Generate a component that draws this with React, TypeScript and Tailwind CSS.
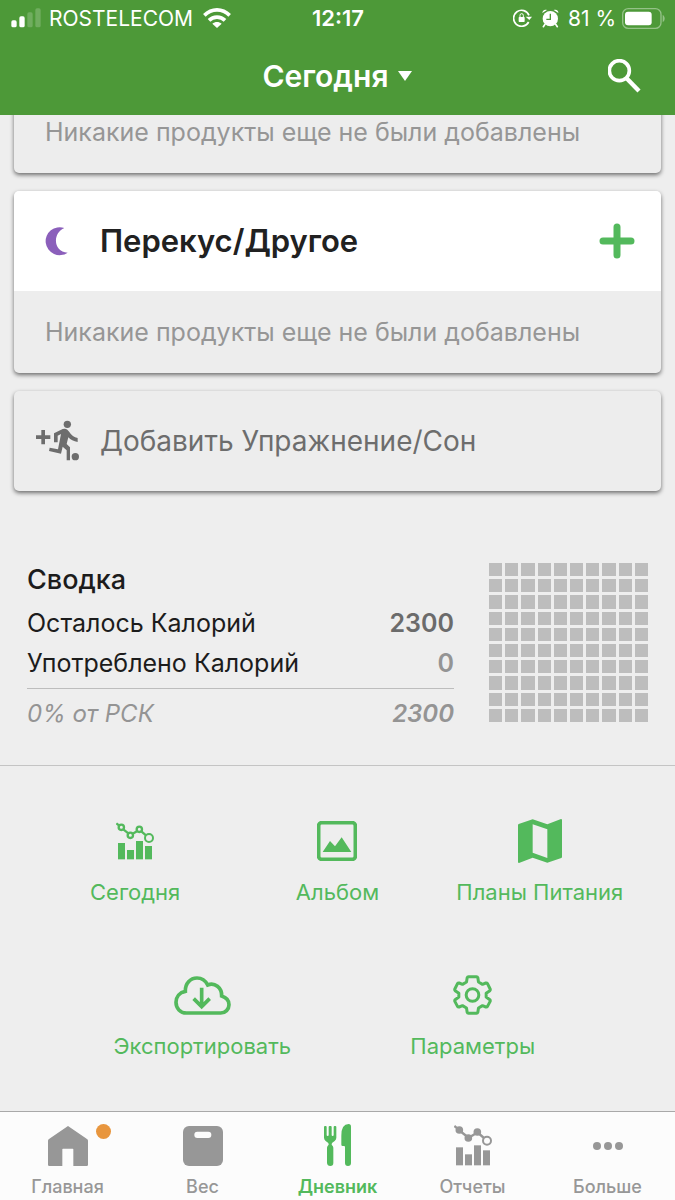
import type { ReactNode } from "react";

const EMPTY_MEAL = "Никакие продукты еще не были добавлены";

function StatusBar() {
  return (
    <div className="grid grid-cols-[1fr_auto_1fr] items-center h-9 pl-[11px] pr-[10px] text-[21px] leading-none">
      <div className="flex items-center">
        <svg className="w-[30px] h-5" viewBox="0 0 90 60" fill="currentColor">
          <rect x="1" y="37" width="16" height="21" rx="5" />
          <rect x="25" y="25" width="16" height="33" rx="5" />
          <rect x="49" y="13" width="16" height="45" rx="5" opacity=".2" />
          <rect x="73" y="1" width="16" height="57" rx="5" opacity=".2" />
        </svg>
        <span className="ml-2 mr-[10px]">ROSTELECOM</span>
        <svg className="w-7 h-5" viewBox="0 0 84 60" fill="none" stroke="currentColor" strokeWidth="11">
          <path d="M4 22 C26 0 58 0 80 22" />
          <path d="M18 37 C31 24 53 24 66 37" />
          <path d="M42 60 L28 47 C36 40 48 40 56 47 Z" fill="currentColor" stroke="none" />
        </svg>
      </div>
      <span className="text-[22px] font-semibold">12:17</span>
      <div className="flex items-center justify-end">
        <svg className="w-[19px] h-[18px] mr-[10px]" viewBox="0 0 57 54" fill="none" stroke="currentColor">
          <path d="M47 39 A24 24 0 1 1 48 19" strokeWidth="5" />
          <path d="M38 23 H57 L49 33 Z" fill="currentColor" stroke="none" />
          <rect x="17" y="24" width="18" height="15" rx="2" fill="currentColor" stroke="none" />
          <path d="M21 25 V19 a5 5 0 0 1 10 0 V25" strokeWidth="3" />
        </svg>
        <svg className="w-[17px] h-[19px] mr-[9px]" viewBox="0 0 51 57" fill="currentColor">
          <circle cx="25" cy="29" r="23" />
          <path d="M1 12 C1 4 8 0 15 3 Z M35 3 C43 0 50 4 49 12 Z" />
          <path d="M9 46 L4 53 M41 46 L46 53" stroke="currentColor" strokeWidth="5" strokeLinecap="round" />
          <path d="M25 14 V31 H13" fill="none" stroke="#4d9938" strokeWidth="4" />
        </svg>
        <span className="mr-[6px]">81 %</span>
        <svg className="w-[43px] h-[21px]" viewBox="0 0 129 63" fill="none">
          <rect x="2" y="2" width="115" height="59" rx="17" stroke="#fff" strokeOpacity=".4" strokeWidth="4" />
          <rect x="9" y="11" width="80" height="41" rx="9" fill="#fff" />
          <path d="M122 21 C130 24 130 39 122 42 Z" fill="#fff" fillOpacity=".4" />
        </svg>
      </div>
    </div>
  );
}

function Header() {
  return (
    <header className="relative z-10 h-[115px] shrink-0 bg-[#4d9938] text-white">
      <StatusBar />
      <div className="grid grid-cols-[1fr_auto_1fr] items-center h-20 px-8">
        <button className="col-start-2 flex items-center gap-[10px] text-[30px] font-semibold">
          Сегодня
          <svg className="w-[14px] h-[10px]" viewBox="0 0 14 10" fill="currentColor">
            <path d="M0 0 H14 L7 10 Z" />
          </svg>
        </button>
        <button className="justify-self-end" aria-label="Поиск">
          <svg className="w-[35px] h-[34px]" viewBox="0 0 105 102" fill="none" stroke="currentColor">
            <circle cx="34" cy="35" r="30" strokeWidth="11" />
            <path d="M55 57 L93 96" strokeWidth="13" />
          </svg>
        </button>
      </div>
    </header>
  );
}

function Card({ children }: { children: ReactNode }) {
  return (
    <section className="rounded-[5px] overflow-hidden bg-[#ededed] shadow-[0_2px_4px_rgba(0,0,0,0.55)]">
      {children}
    </section>
  );
}

function EmptyMeal() {
  return (
    <p className="flex items-center h-[82px] pt-[2px] pl-[31px] text-[25px] whitespace-nowrap text-[#969696]">
      {EMPTY_MEAL}
    </p>
  );
}

function Meals() {
  return (
    <div className="flex flex-col gap-[18px] mx-[14px] -mt-6">
      <Card>
        <EmptyMeal />
      </Card>
      <Card>
        <div className="flex items-center h-[100px] pl-[31px] pr-[26px] bg-white">
          <svg className="w-[23px] h-[29px]" viewBox="0 0 69 87" fill="#8b5fbb">
            <path d="M58 3 A42 42 0 1 0 68 77 C24 75 22 18 58 3 Z" />
          </svg>
          <h2 className="ml-8 text-[31px] font-semibold text-[#212121]">Перекус/Другое</h2>
          <button className="ml-auto text-[#53b95c]" aria-label="Добавить продукт">
            <svg className="w-9 h-9" viewBox="0 0 36 36" stroke="currentColor" strokeWidth="7" strokeLinecap="round">
              <path d="M18 4 V32 M4 18 H32" />
            </svg>
          </button>
        </div>
        <EmptyMeal />
      </Card>
      <Card>
        <button className="flex items-center w-full h-[100px] pl-[21px] text-[28px] text-[#6d6d6d]">
          <svg className="w-[46px] h-[42px] mr-[19px]" viewBox="0 0 138 126" fill="currentColor">
            <path d="M3 46 H19 V30 H30 V46 H46 V57 H30 V73 H19 V57 H3 Z" />
            <circle cx="97" cy="13" r="11" />
            <circle cx="121" cy="110" r="11" />
            <path d="M57 67 V40 L83 27 Q91 24 97 29 L103 36 Q112 51 128 54 V66 Q110 63 100 52 L95 72 L105 82 V121 H95 V91 L83 80 L78 101 L42 93 L44 83 L69 88 L78 42 L68 47 V67 Z" />
          </svg>
          Добавить Упражнение/Сон
        </button>
      </Card>
    </div>
  );
}

function Summary() {
  return (
    <section className="flex mt-[71px] px-[27px] pb-10 border-b border-[#c4c4c4] text-[25px]">
      <div className="flex-1 mr-[35px] text-[#1c1c1c]">
        <h2 className="h-[41px] leading-9 text-[27px] font-medium">Сводка</h2>
        <dl>
          <div className="flex justify-between h-10 leading-10">
            <dt>Осталось Калорий</dt>
            <dd className="font-semibold text-[#6b6b6b]">2300</dd>
          </div>
          <div className="flex justify-between h-10 leading-10">
            <dt>Употреблено Калорий</dt>
            <dd className="font-semibold text-[#949494]">0</dd>
          </div>
          <div className="flex justify-between mt-[5px] pt-[5px] h-[37px] leading-10 border-t border-[#bdbdbd] text-[24px] italic text-[#949494]">
            <dt>0% от РСК</dt>
            <dd className="font-semibold">2300</dd>
          </div>
        </dl>
      </div>
      <div className="grid grid-cols-10 gap-[3px] w-[159px] h-[159px] mt-px">
        {Array.from({ length: 100 }, (_, i) => (
          <span key={i} className="bg-[#bdbdbd]" />
        ))}
      </div>
    </section>
  );
}

function ChartIcon({ filled = false }: { filled?: boolean }) {
  const d = filled ? 5 : 0;
  const dot = filled ? "currentColor" : "none";
  return (
    <svg
      className={filled ? "w-[38px] h-[42px]" : "w-[39px] h-[38px]"}
      viewBox={filled ? "0 -2 114 126" : "0 0 117 114"}
      fill="none"
      stroke="currentColor"
      strokeWidth="7"
    >
      <path d="M1 4 L10 11 M22 22 L37 34 M49 36 L64 27 M76 28 L90 40" />
      <circle cx="16" cy="16" r="8" fill={dot} />
      <circle cx="43" cy="40" r="8" fill={dot} />
      <circle cx="70" cy="22" r="8" fill={dot} />
      <circle cx="99" cy="48" r="12" strokeWidth="6" />
      <g fill="currentColor" stroke="none">
        <rect x="6" y={63 + d} width="21" height={49 + d} />
        <rect x="33" y={84 + d} width="21" height={28 + d} />
        <rect x="60" y={57 + d} width="21" height={55 + d} />
        <rect x="87" y={72 + d} width="21" height={40 + d} />
      </g>
    </svg>
  );
}

function AlbumIcon() {
  return (
    <svg className="w-10 h-10" viewBox="0 0 120 120" fill="currentColor">
      <rect x="5" y="5" width="110" height="110" rx="9" fill="none" stroke="currentColor" strokeWidth="11" />
      <path d="M17 93 L39 60 L54 76 L74 49 L103 93 Z" />
    </svg>
  );
}

function MapIcon() {
  return (
    <svg className="w-11 h-11" viewBox="0 0 132 132" fill="currentColor" fillRule="evenodd">
      <path d="M2 15 L44 1 L88 16 L129 0 Q132 0 132 3 V114 Q132 116 130 117 L88 131 L44 116 L3 132 Q0 132 0 129 V18 Q0 16 2 15 Z M44 16 V101 L88 117 V31 Z" />
    </svg>
  );
}

function CloudIcon() {
  return (
    <svg className="w-[57px] h-[39px]" viewBox="0 0 171 117" fill="none" stroke="currentColor" strokeWidth="11">
      <path d="M37 111 C19 111 6 97 6 79 C6 62 17 49 34 46 C33 22 49 6 69 6 C84 6 94 13 101 27 C122 18 144 35 143 60 C156 64 165 73 165 86 C165 100 154 111 140 111 Z" />
      <path d="M83 35 V91 M59 68 L83 92 L107 68" />
    </svg>
  );
}

function GearIcon() {
  return (
    <svg className="w-[39px] h-10" viewBox="0 0 116 120" fill="none" stroke="currentColor" strokeWidth="9" strokeLinejoin="round">
      <path d="M46 5 H70 Q73 5 74 8 L76 21 L88 28 L98 24 Q101 23 103 26 L111 42 Q112 45 110 47 L99 55 V66 L110 74 Q112 76 111 79 L103 94 Q101 97 98 96 L88 92 L76 99 L74 112 Q73 115 70 115 H46 Q43 115 42 112 L40 99 L28 92 L18 96 Q15 97 13 94 L5 79 Q4 76 6 74 L17 66 V55 L6 47 Q4 45 5 42 L13 26 Q15 23 18 24 L28 28 L40 21 L42 8 Q43 5 46 5 Z" />
      <circle cx="58" cy="60" r="19" />
    </svg>
  );
}

function Shortcut({ icon, label }: { icon: ReactNode; label: string }) {
  return (
    <button className="flex flex-col items-center whitespace-nowrap">
      <span className="flex items-center h-11">{icon}</span>
      <span className="mt-3 text-[22px] leading-[34px]">{label}</span>
    </button>
  );
}

function Shortcuts() {
  return (
    <section className="pt-[53px] text-[#53b95c]">
      <div className="grid grid-cols-3 px-[34px]">
        <Shortcut icon={<ChartIcon />} label="Сегодня" />
        <Shortcut icon={<AlbumIcon />} label="Альбом" />
        <Shortcut icon={<MapIcon />} label="Планы Питания" />
      </div>
      <div className="grid grid-cols-2 mt-16 px-[67px]">
        <Shortcut icon={<CloudIcon />} label="Экспортировать" />
        <Shortcut icon={<GearIcon />} label="Параметры" />
      </div>
    </section>
  );
}

function HomeIcon() {
  return (
    <svg className="w-10 h-10" viewBox="0 0 120 120" fill="currentColor">
      <path d="M60 0 L118 40 Q120 42 120 44 V116 Q120 120 116 120 H76 V70 Q76 68 74 68 H45 Q43 68 43 70 V120 H4 Q0 120 0 116 V44 Q0 42 2 40 Z" />
    </svg>
  );
}

function ScaleIcon() {
  return (
    <svg className="w-10 h-10" viewBox="0 0 120 120">
      <rect width="120" height="120" rx="18" fill="currentColor" />
      <rect x="34" y="17" width="51" height="19" rx="9" fill="#fcfcfc" />
    </svg>
  );
}

function CutleryIcon() {
  return (
    <svg className="w-7 h-[42px]" viewBox="0 0 84 126" fill="currentColor">
      <path d="M0 9 Q0 6 3 6 H5 Q8 6 8 9 V33 Q8 36 11 36 T14 33 V9 Q14 6 17 6 H20 Q23 6 23 9 V33 Q23 36 26 36 T29 33 V9 Q29 6 32 6 H34 Q37 6 37 9 V41 Q37 47 32 51 L25 56 Q23 58 23 62 Q28 66 28 71 V117 Q28 126 19 126 T9 117 V71 Q9 66 14 62 Q14 58 12 56 L5 51 Q0 47 0 41 Z" />
      <path d="M74 0 Q81 0 81 8 V117 Q81 126 72 126 T63 117 V69 Q63 66 60 66 H56 Q52 66 52 62 V35 Q52 0 74 0 Z" />
    </svg>
  );
}

function MoreIcon() {
  return (
    <svg className="w-[30px] h-10" viewBox="0 0 30 40" fill="currentColor">
      <circle cx="4" cy="20" r="4" />
      <circle cx="15" cy="20" r="4" />
      <circle cx="26" cy="20" r="4" />
    </svg>
  );
}

const tabs = [
  { label: "Главная", icon: <HomeIcon />, badge: true },
  { label: "Вес", icon: <ScaleIcon /> },
  { label: "Дневник", icon: <CutleryIcon />, active: true },
  { label: "Отчеты", icon: <ChartIcon filled /> },
  { label: "Больше", icon: <MoreIcon /> },
];

function TabBar() {
  return (
    <nav className="grid grid-cols-5 mt-auto h-[89px] border-t border-[#a9a9a9] bg-[#fcfcfc] text-[18px]">
      {tabs.map((tab) => (
        <a
          key={tab.label}
          href="#"
          className={`flex flex-col items-center pt-3 ${tab.active ? "font-semibold text-[#53b95c]" : "font-medium text-[#979797]"}`}
        >
          <span className="relative flex items-end h-[42px]">
            {tab.icon}
            {tab.badge && <span className="absolute top-0 -right-[23px] size-[15px] rounded-full bg-[#e8963e]" />}
          </span>
          <span className="mt-[9px] leading-6">{tab.label}</span>
        </a>
      ))}
    </nav>
  );
}

export default function App() {
  return (
    <div className="flex flex-col min-h-screen bg-[#eeeeee] font-['Inter','Liberation_Sans',sans-serif]">
      <Header />
      <main>
        <Meals />
        <Summary />
        <Shortcuts />
      </main>
      <TabBar />
    </div>
  );
}
